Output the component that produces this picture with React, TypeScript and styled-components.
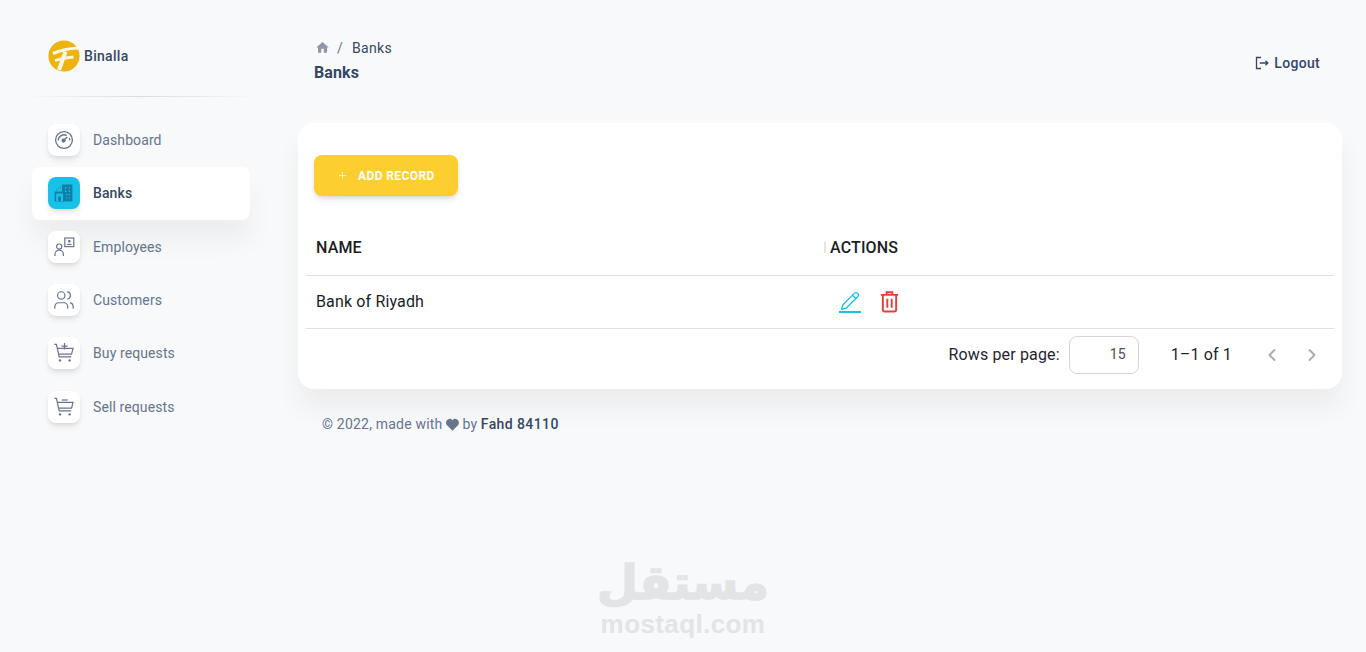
import React from 'react';
import styled, { createGlobalStyle } from 'styled-components';
import { ChevronLeft, ChevronRight, Plus, Users, Pencil } from 'lucide-react';

const GlobalStyle = createGlobalStyle`
  html, body {
    margin: 0;
    height: 100%;
    background: #f8f9fa;
    font-family: Roboto, "Liberation Sans", sans-serif;
    overflow: hidden;
  }
  * { box-sizing: border-box; }
`;

const GaugeIcon = () => (
  <svg width="20" height="20" viewBox="0 0 20 20" fill="none" stroke="#67748e" strokeWidth="1.3">
    <circle cx="10" cy="10" r="8.4" />
    <path d="M4.2 10.5a5.8 5.8 0 0 1 8.6-5" />
    <path d="M15.4 8a5.8 5.8 0 0 1 .4 2.5" />
    <circle cx="9.6" cy="10.6" r="1.5" fill="#67748e" />
    <path d="M10 10l3.4-3" />
  </svg>
);

const BuildingIcon = () => (
  <svg width="20" height="20" viewBox="0 0 20 20" fill="none">
    <path d="M8 1.500h10.400v17H8z" fill="#0e7fa6" />
    <path d="M.6 8.600h10v9.900H.6z" fill="#0e7fa6" />
    <path d="M2.200 10.400h6.800v8.100H7V13.400H4.200v5.100h-2z" fill="#17c1e8" />
    <path d="M11 4.200h1.400v1.400H11zM14.600 4.200H16v1.400h-1.400zM11 7.600h1.400V9H11zM14.600 7.600H16V9h-1.400zM12 11h1.200v1.200H12zM14.800 11H16v1.200h-1.200zM12 14.400h1.200v1.200H12zM14.800 14.400H16v1.200h-1.200z" fill="#17c1e8" />
    <path d="M2 6.800h1M4 5.600h1M6 4.200h1" stroke="#0e7fa6" strokeWidth="1" />
  </svg>
);

const EmployeeIcon = () => (
  <svg width="21" height="20" viewBox="0 0 21 20" fill="none" stroke="#67748e" strokeWidth="1.2">
    <circle cx="5.200" cy="9.600" r="2.600" />
    <path d="M1 19v-1.600a4.200 4.200 0 0 1 8.400 0V19" />
    <rect x="10.800" y="1" width="9" height="8.600" />
    <circle cx="15.300" cy="4.200" r="1.300" fill="#67748e" stroke="none" />
    <path d="M12.600 8c.4-1.700 5-1.700 5.400 0z" fill="#67748e" stroke="none" />
  </svg>
);

const CartIcon = ({ plus }: { plus?: boolean }) => (
  <svg width="20" height="20" viewBox="0 0 20 20" fill="none" stroke="#67748e" strokeWidth="1.2">
    <path d="M.4 1.400h2l2.800 12.400h12" />
    <path d="M3.400 5.400H19l-1.400 5.800H4.600" />
    <circle cx="6" cy="17.400" r="1.200" fill="#67748e" stroke="none" />
    <circle cx="15.600" cy="17.400" r="1.200" fill="#67748e" stroke="none" />
    {plus ? (
      <path d="M7.400 3.200h6.200M10.500 0v6.400" stroke="#67748e" />
    ) : (
      <path d="M7.800 3h6" stroke="#67748e" />
    )}
  </svg>
);

const navItems = [
  { label: 'Dashboard', icon: <GaugeIcon /> },
  { label: 'Banks', icon: <BuildingIcon />, active: true },
  { label: 'Employees', icon: <EmployeeIcon /> },
  { label: 'Customers', icon: <Users size={22} color="#67748e" strokeWidth={1.3} /> },
  { label: 'Buy requests', icon: <CartIcon plus /> },
  { label: 'Sell requests', icon: <CartIcon /> },
];

const App = () => {
  return (
    <Shell>
      <GlobalStyle />
      <Sidebar>
        <Brand>
          <svg width="32" height="32" viewBox="0 0 32 32" fill="none">
            <circle cx="16" cy="16" r="15.600" fill="#eeb30f" />
            <path d="M5 13.500C12 10.500 21 8.500 30 8" stroke="#fff8e6" strokeWidth="3.200" />
            <path d="M7 20.500C13 18.500 19 17.500 25.500 17" stroke="#fff8e6" strokeWidth="2.800" />
            <path d="M17.500 11.500 11 30" stroke="#fff8e6" strokeWidth="4" />
          </svg>
          <BrandName>Binalla</BrandName>
        </Brand>
        <SideDivider />
        <Nav>
          {navItems.map((item) => (
            <NavItem key={item.label} $active={item.active}>
              <NavIcon $active={item.active}>{item.icon}</NavIcon>
              <NavLabel $active={item.active}>{item.label}</NavLabel>
            </NavItem>
          ))}
        </Nav>
      </Sidebar>

      <Main>
        <Header>
          <TitleBlock>
            <Crumbs>
              <HomeGlyph width="15" height="15" viewBox="0 0 24 24" fill="#8f97a8">
                <path d="M10 20.500v-6.500h4v6.500h5.200v-8.500H22L12 3 2 12h2.800v8.500z" />
              </HomeGlyph>
              <CrumbSep>/</CrumbSep>
              <span>Banks</span>
            </Crumbs>
            <PageTitle>Banks</PageTitle>
          </TitleBlock>
          <Logout>
            <svg width="14" height="14" viewBox="0 0 14 14" fill="none" stroke="#344767" strokeWidth="1.300">
              <path d="M6 1.500H1.500v11H6" />
              <path d="M4.800 7h8M10.500 4.800 12.800 7l-2.300 2.200" />
            </svg>
            Logout
          </Logout>
        </Header>

        <Card>
          <AddButton>
            <Plus size={11} color="#fff3c4" strokeWidth={2} />
            ADD RECORD
          </AddButton>

          <HeadRow>
            <NameCell>NAME</NameCell>
            <ActionsHead>ACTIONS</ActionsHead>
          </HeadRow>
          <BodyRow>
            <NameCell>Bank of Riyadh</NameCell>
            <ActionsCell>
              <EditAction>
                <Pencil size={20} color="#17c1e8" strokeWidth={1.600} />
              </EditAction>
              <svg width="19" height="22" viewBox="0 0 20 23" fill="none" stroke="#ea3a3a" strokeWidth="2">
                <path d="M1 4h18M7 4V1.200h6V4" />
                <path d="M3 4v16a1.500 1.500 0 0 0 1.500 1.500h11A1.500 1.500 0 0 0 17 20V4" />
                <path d="M7.700 8v9.500M12.300 8v9.500" />
              </svg>
            </ActionsCell>
          </BodyRow>

          <Pagination>
            <span>Rows per page:</span>
            <PageSize>15</PageSize>
            <PageCount>1–1 of 1</PageCount>
            <PageArrows>
              <ChevronLeft size={20} color="#a9adb3" strokeWidth={2.400} />
              <ChevronRight size={20} color="#a9adb3" strokeWidth={2.400} />
            </PageArrows>
          </Pagination>
        </Card>

        <Footer>
          © 2022, made with
          <svg width="15" height="13" viewBox="0 0 24 22" fill="#67748e">
            <path d="M12 21.500 2.800 12.300C-.300 9.200 1 2 6.800 1.500 9 1.300 11 2.400 12 4.300c1-1.900 3-3 5.200-2.800C23 2 24.300 9.200 21.200 12.300z" />
          </svg>
          by <FooterName>Fahd 84110</FooterName>
        </Footer>
      </Main>

      <Watermark>
        <WatermarkArabic>مستقل</WatermarkArabic>
        <WatermarkLatin>mostaql.com</WatermarkLatin>
      </Watermark>
    </Shell>
  );
};
export default App;

const Shell = styled.div`
  position: relative;
  display: flex;
  height: 652px;
  background: #f8f9fa;
`;

const Sidebar = styled.aside`
  flex: 0 0 282px;
  min-width: 0;
  padding: 40px 0 0 32px;
`;

const Brand = styled.div`
  display: flex;
  align-items: center;
  gap: 4px;
  height: 32px;
  padding-left: 16px;
`;

const BrandName = styled.span`
  font-size: 14px;
  font-weight: 500;
  letter-spacing: 0.3px;
  color: #344767;
`;

const SideDivider = styled.div`
  width: 236px;
  height: 1px;
  margin: 24px 0 16.200px -8px;
  background: linear-gradient(90deg, rgba(52, 71, 103, 0), rgba(52, 71, 103, 0.16), rgba(52, 71, 103, 0));
`;

const Nav = styled.nav`
  display: flex;
  flex-direction: column;
  width: 218px;
`;

const NavItem = styled.div<{ $active?: boolean }>`
  display: flex;
  align-items: center;
  gap: 13px;
  height: 53.400px;
  padding-left: 16px;
  border-radius: 8px;
  background: ${(p) => (p.$active ? '#fff' : 'transparent')};
  box-shadow: ${(p) => (p.$active ? '0 20px 27px rgba(0, 0, 0, 0.05)' : 'none')};
`;

const NavIcon = styled.div<{ $active?: boolean }>`
  display: flex;
  align-items: center;
  justify-content: center;
  width: 32px;
  height: 32px;
  border-radius: 8px;
  background: ${(p) => (p.$active ? '#17c1e8' : '#fff')};
  box-shadow: 0 4px 6px -1px rgba(0, 0, 0, 0.1), 0 2px 4px -1px rgba(0, 0, 0, 0.06);
`;

const NavLabel = styled.span<{ $active?: boolean }>`
  font-size: 14px;
  font-weight: ${(p) => (p.$active ? 500 : 400)};
  letter-spacing: 0.1px;
  color: ${(p) => (p.$active ? '#344767' : '#67748e')};
`;

const Main = styled.main`
  flex: 1;
  min-width: 0;
  padding: 40px 24px 0 16px;
`;

const Header = styled.header`
  display: flex;
  align-items: center;
  justify-content: space-between;
  height: 83px;
  padding: 0 22px 37px 16px;
`;

const TitleBlock = styled.div`
  margin-bottom: 4px;
`;

const Crumbs = styled.div`
  display: flex;
  align-items: center;
  padding-left: 1px;
  font-size: 14px;
  line-height: 17px;
  letter-spacing: 0.3px;
  color: #344767;
`;

const HomeGlyph = styled.svg`
  margin-bottom: 2px;
`;

const CrumbSep = styled.span`
  margin: 0 9px 0 7px;
  color: #67748e;
`;

const PageTitle = styled.div`
  margin-top: 6px;
  font-size: 16px;
  line-height: 19px;
  font-weight: 700;
  letter-spacing: 0.1px;
  color: #344767;
`;

const Logout = styled.div`
  display: flex;
  align-items: center;
  gap: 5px;
  font-size: 14px;
  font-weight: 500;
  letter-spacing: 0.3px;
  color: #344767;
`;

const Card = styled.section`
  height: 266px;
  padding: 32px 8px 0;
  background: #fff;
  border-radius: 16px;
  box-shadow: 0 20px 27px rgba(0, 0, 0, 0.05);
`;

const AddButton = styled.button`
  display: flex;
  align-items: center;
  gap: 10px;
  width: 144px;
  height: 41px;
  margin: 0 0 24px 8px;
  padding: 0 0 0 23px;
  border: 0;
  border-radius: 8px;
  background: #fdce30;
  box-shadow: 0 4px 7px -1px rgba(0, 0, 0, 0.11), 0 2px 4px -1px rgba(0, 0, 0, 0.07);
  font-family: inherit;
  font-size: 12px;
  font-weight: 700;
  letter-spacing: 0.4px;
  color: #fff;
`;

const HeadRow = styled.div`
  display: flex;
  align-items: center;
  height: 56px;
  border-bottom: 1px solid #e0e0e0;
  font-size: 16px;
  font-weight: 500;
  letter-spacing: 0.15px;
  color: #1a1d24;
`;

const BodyRow = styled.div`
  display: flex;
  align-items: center;
  height: 53px;
  padding-bottom: 1px;
  border-bottom: 1px solid #e0e0e0;
  font-size: 16px;
  letter-spacing: 0.15px;
  color: #1a1d24;
`;

const NameCell = styled.div`
  flex: 0 0 518px;
  padding-left: 10px;
`;

const ActionsHead = styled.div`
  position: relative;
  padding-left: 6px;

  &::before {
    content: '';
    position: absolute;
    left: 0;
    top: 4px;
    bottom: 4px;
    width: 2px;
    background: #e4e4e4;
  }
`;

const ActionsCell = styled.div`
  display: flex;
  align-items: center;
  gap: 19px;
  padding-left: 15px;
`;

const EditAction = styled.div`
  display: flex;
  justify-content: center;
  width: 22px;
  border-bottom: 2px solid #17c1e8;
`;

const Pagination = styled.div`
  display: flex;
  align-items: center;
  justify-content: flex-end;
  height: 51px;
  padding-right: 12px;
  font-size: 16px;
  letter-spacing: 0.15px;
  color: #1f2430;
`;

const PageSize = styled.div`
  width: 70px;
  height: 38px;
  margin-left: 9px;
  padding-right: 12px;
  border: 1px solid #d2d6da;
  border-radius: 8px;
  font-size: 14px;
  line-height: 34px;
  text-align: right;
  color: #495057;
`;

const PageCount = styled.span`
  margin-left: 32px;
`;

const PageArrows = styled.div`
  display: flex;
  gap: 20px;
  margin-left: 30px;
`;

const Footer = styled.footer`
  display: flex;
  align-items: center;
  gap: 2.500px;
  margin-top: 26px;
  padding-left: 24px;
  font-size: 14px;
  line-height: 18px;
  letter-spacing: 0.2px;
  color: #67748e;
`;

const FooterName = styled.span`
  margin-left: 1px;
  font-weight: 500;
  letter-spacing: 0.4px;
  color: #344767;
`;

const Watermark = styled.div`
  position: absolute;
  left: 600px;
  top: 556px;
  width: 166px;
  display: flex;
  flex-direction: column;
  align-items: center;
  pointer-events: none;
`;

const WatermarkArabic = styled.div`
  direction: rtl;
  font-family: "DejaVu Sans", sans-serif;
  font-size: 47px;
  line-height: 54px;
  font-weight: 700;
  color: #e3e4e6;
  -webkit-text-stroke: 1.500px #e3e4e6;
`;

const WatermarkLatin = styled.div`
  font-family: "Liberation Sans", sans-serif;
  font-size: 26px;
  line-height: 28px;
  font-weight: 700;
  letter-spacing: 0.4px;
  color: #e3e4e6;
`;
